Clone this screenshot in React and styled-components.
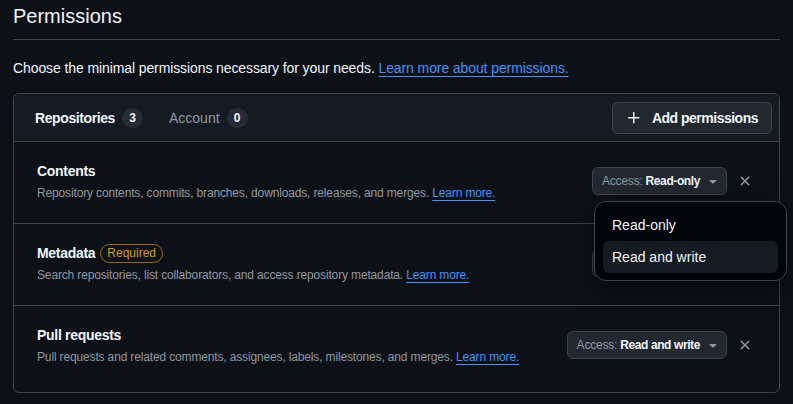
import React from 'react'
import styled, { createGlobalStyle } from 'styled-components'

const Global = createGlobalStyle`
  body {
    margin: 0;
    background: #0d1117;
    color: #f0f6fc;
    font-family: "Liberation Sans", Arial, sans-serif;
  }
`;

const Page = styled.div`
  padding: 4px 13px 0;
`;

const Heading = styled.h2`
  margin: 0;
  font-size: 20px;
  font-weight: 400;
  line-height: 25px;
  padding-bottom: 10px;
  border-bottom: 1px solid #3d444d;
`;

const Lead = styled.p`
  margin: 18px 0 15px;
  font-size: 14px;
  line-height: 20px;
  letter-spacing: -0.1px;
`;

const Link = styled.a`
  color: #4493f8;
  text-decoration: underline;
  text-underline-offset: 3px;
  cursor: pointer;
`;

const Box = styled.div`
  border: 1px solid #3d444d;
  border-radius: 6px;
`;

const BoxHeader = styled.div`
  display: flex;
  align-items: center;
  justify-content: space-between;
  height: 47px;
  padding: 0 7px 0 21px;
  background: #151b23;
  border-bottom: 1px solid #3d444d;
  border-radius: 6px 6px 0 0;
`;

const Tabs = styled.div`
  display: flex;
  align-items: center;
  gap: 26px;
`;

const Tab = styled.span`
  display: flex;
  align-items: center;
  gap: 7px;
  font-size: 14px;
  font-weight: ${p => (p.active ? 600 : 400)};
  letter-spacing: ${p => (p.active ? '-0.4px' : '0')};
  color: ${p => (p.active ? '#f0f6fc' : '#9198a1')};
`;

const Counter = styled.span`
  display: inline-flex;
  align-items: center;
  justify-content: center;
  min-width: 21px;
  height: 20px;
  padding: 0 6px;
  box-sizing: border-box;
  border-radius: 10px;
  background: #262c36;
  color: #f0f6fc;
  font-size: 12px;
  font-weight: 600;
  letter-spacing: 0;
`;

const Button = styled.button`
  display: flex;
  align-items: center;
  gap: 10px;
  height: 32px;
  padding: 0 13px;
  background: #212830;
  border: 1px solid #3d444d;
  border-radius: 6px;
  color: #f0f6fc;
  font-family: inherit;
  font-size: 14px;
  font-weight: 600;
  letter-spacing: -0.5px;
`;

const Row = styled.div`
  position: relative;
  display: flex;
  align-items: center;
  justify-content: space-between;
  padding: ${p => (p.last ? '19px 22px 26px 23px' : '19px 22px 21px 23px')};
  border-top: ${p => (p.first ? 'none' : '1px solid #3d444d')};
`;

const Info = styled.div`
  display: flex;
  flex-direction: column;
  gap: 3px;
`;

const Title = styled.div`
  display: flex;
  align-items: center;
  gap: 5px;
  font-size: 14px;
  font-weight: 600;
  line-height: 20px;
  letter-spacing: -0.3px;
`;

const Required = styled.span`
  padding: 0 6px;
  border: 1px solid #9e6a03;
  border-radius: 10px;
  color: #d29922;
  font-size: 12px;
  font-weight: 500;
  line-height: 17px;
  letter-spacing: 0;
`;

const Desc = styled.div`
  font-size: 12px;
  line-height: 18px;
  color: #9198a1;
  letter-spacing: -0.15px;
`;

const Controls = styled.div`
  display: flex;
  align-items: center;
  gap: 6px;
  margin-top: -2px;
`;

const Select = styled.button`
  display: flex;
  align-items: center;
  gap: 3px;
  height: 28px;
  padding: 0 5px 0 9px;
  background: #212830;
  border: 1px solid #3d444d;
  border-radius: 6px;
  color: #9198a1;
  font-family: inherit;
  font-size: 12px;
  letter-spacing: -0.2px;
  & b {
    color: #f0f6fc;
    font-weight: 600;
    letter-spacing: -0.4px;
    margin-right: 2px;
  }
`;

const IconButton = styled.span`
  display: flex;
  width: 24px;
  height: 24px;
  align-items: center;
  justify-content: center;
  color: #9198a1;
`;

const Menu = styled.div`
  position: absolute;
  top: 59px;
  right: -8px;
  width: 175px;
  padding: 7px 8px;
  background: #010409;
  border: 1px solid #3d444d;
  border-radius: 12px;
  box-shadow: 0 8px 24px rgba(1, 4, 9, 0.6);
  z-index: 2;
`;

const MenuItem = styled.div`
  height: 32px;
  display: flex;
  align-items: center;
  padding: 0 9px;
  border-radius: 6px;
  font-size: 14px;
  background: ${p => (p.hover ? '#151b23' : 'transparent')};
`;

const XIcon = () => (
  <svg width="16" height="16" viewBox="0 0 16 16" fill="currentColor">
    <path d="M3.72 3.72a.75.75 0 0 1 1.06 0L8 6.94l3.22-3.22a.749.749 0 0 1 1.275.326.749.749 0 0 1-.215.734L9.06 8l3.220 3.22a.749.749 0 0 1-.326 1.275.749.749 0 0 1-.734-.215L8 9.06l-3.22 3.22a.751.751 0 0 1-1.042-.018.751.751 0 0 1-.018-1.042L6.94 8 3.72 4.78a.75.75 0 0 1 0-1.06Z" />
  </svg>
)

const PlusIcon = () => (
  <svg width="16" height="16" viewBox="0 0 16 16" fill="currentColor">
    <path d="M7.75 2a.75.75 0 0 1 .75.75V7h4.25a.75.75 0 0 1 0 1.5H8.5v4.25a.75.75 0 0 1-1.5 0V8.5H2.75a.75.75 0 0 1 0-1.5H7V2.75A.75.75 0 0 1 7.75 2Z" />
  </svg>
)

const Caret = () => (
  <svg width="16" height="16" viewBox="0 0 16 16" fill="#9198a1">
    <path d="m4.427 7.427 3.396 3.396a.25.25 0 0 0 .354 0l3.396-3.396A.25.25 0 0 0 11.396 7H4.604a.25.25 0 0 0-.177.427Z" />
  </svg>
)

const permissions = [
  {
    name: 'Contents',
    desc: 'Repository contents, commits, branches, downloads, releases, and merges.',
    access: 'Read-only',
    open: true,
  },
  {
    name: 'Metadata',
    desc: 'Search repositories, list collaborators, and access repository metadata.',
    access: 'Read-only',
    required: true,
  },
  {
    name: 'Pull requests',
    desc: 'Pull requests and related comments, assignees, labels, milestones, and merges.',
    access: 'Read and write',
  },
]

function App() {
  return (
    <Page>
      <Global />
      <Heading>Permissions</Heading>
      <Lead>
        Choose the minimal permissions necessary for your needs.{' '}
        <Link>Learn more about permissions.</Link>
      </Lead>
      <Box>
        <BoxHeader>
          <Tabs>
            <Tab active>Repositories <Counter>3</Counter></Tab>
            <Tab>Account <Counter>0</Counter></Tab>
          </Tabs>
          <Button><PlusIcon /> Add permissions</Button>
        </BoxHeader>
        {permissions.map((p, i) => (
          <Row key={p.name} first={i === 0} last={i === permissions.length - 1}>
            <Info>
              <Title>
                {p.name}
                {p.required && <Required>Required</Required>}
              </Title>
              <Desc>{p.desc} <Link>Learn more.</Link></Desc>
            </Info>
            <Controls>
              <Select>
                Access: <b>{p.access}</b>
                <Caret />
              </Select>
              <IconButton><XIcon /></IconButton>
            </Controls>
            {p.open && (
              <Menu>
                <MenuItem>Read-only</MenuItem>
                <MenuItem hover>Read and write</MenuItem>
              </Menu>
            )}
          </Row>
        ))}
      </Box>
    </Page>
  )
}

export default App
